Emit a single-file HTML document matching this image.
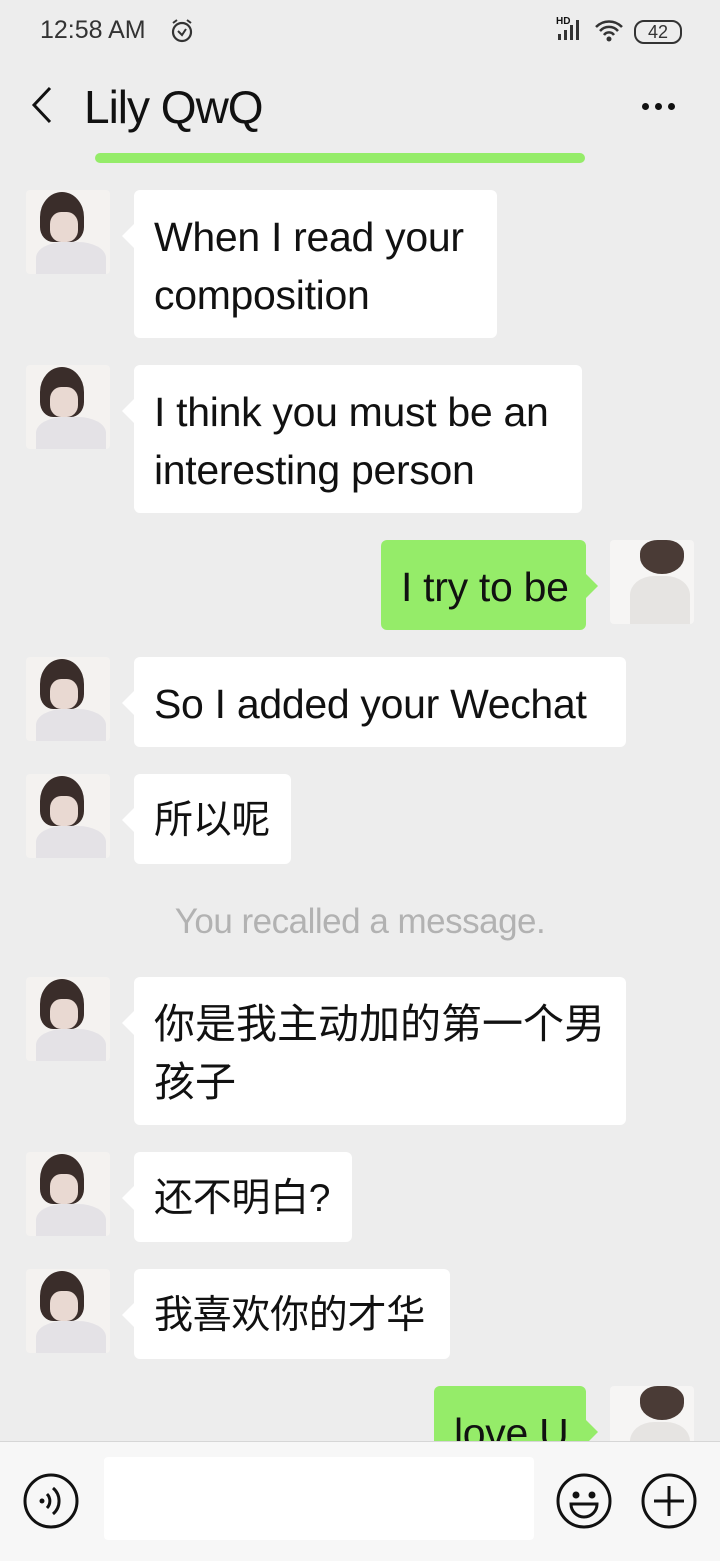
<!DOCTYPE html>
<html><head><meta charset="utf-8"><style>
body{margin:0;width:720px;height:1560px;background:#ededed;position:relative;overflow:hidden;font-family:"Liberation Sans","Noto Sans CJK SC",sans-serif;color:#111}
.a{position:absolute}
.b{position:absolute;background:#fff;border-radius:6px;font-size:41px;line-height:58px;padding:18px 10px 14px 20px;box-sizing:border-box;letter-spacing:-0.3px}
.n{white-space:nowrap}
.b.l::before{content:"";position:absolute;left:-12px;top:34px;border:12px solid transparent;border-right-color:#fff;border-left:0}
.b.r{background:#95ec69}
.b.r::after{content:"";position:absolute;right:-12px;top:34px;border:12px solid transparent;border-left-color:#95ec69;border-right:0}
.av{position:absolute;width:84px;height:84px;background:#f4f2f0;overflow:hidden;border-radius:4px}
.av i{position:absolute;display:block}
</style></head><body>
<div class="a" style="left:40px;top:16px;font-size:25px;color:#333">12:58 AM</div>
<svg class="a" style="left:170px;top:18px" width="24" height="26" viewBox="0 0 24 26"><circle cx="12" cy="14" r="9" fill="none" stroke="#333" stroke-width="2.2"/><path d="M8 13l4 4 4-6M3 5l4-3M21 5l-4-3" fill="none" stroke="#333" stroke-width="2"/></svg>
<div class="a" style="left:556px;top:16px;font-size:10px;font-weight:bold">HD</div>
<svg class="a" style="left:556px;top:20px" width="30" height="22"><rect x="2" y="14" width="3" height="6" fill="#333"/><rect x="8" y="10" width="3" height="10" fill="#333"/><rect x="14" y="5" width="3" height="15" fill="#333"/><rect x="20" y="0" width="3" height="20" fill="#333"/></svg>
<svg class="a" style="left:594px;top:18px" width="32" height="26" viewBox="0 0 32 26"><path d="M2 9a18 18 0 0 1 26 0M6 13a12 12 0 0 1 18 0M10 17a6 6 0 0 1 10 0" fill="none" stroke="#333" stroke-width="2.5"/><circle cx="15" cy="21" r="2.5" fill="#333"/></svg>
<div class="a" style="left:634px;top:20px;width:44px;height:20px;border:2px solid #333;border-radius:10px;font-size:18px;line-height:20px;text-align:center;color:#333">42</div>
<svg class="a" style="left:30px;top:86px" width="24" height="38"><path d="M20 2L4 19l16 17" fill="none" stroke="#111" stroke-width="3"/></svg>
<div class="a" style="left:84px;top:80px;font-size:46px;letter-spacing:-1px">Lily QwQ</div>
<div class="a" style="left:642px;top:103px;font-size:0"><span style="display:inline-block;width:7px;height:7px;border-radius:50%;background:#111;margin-right:6px"></span><span style="display:inline-block;width:7px;height:7px;border-radius:50%;background:#111;margin-right:6px"></span><span style="display:inline-block;width:7px;height:7px;border-radius:50%;background:#111"></span></div>
<div class="a" style="left:95px;top:153px;width:490px;height:10px;background:#95ec69;border-radius:5px"></div>

<div class="av" style="left:26px;top:190px"><i style="left:14px;top:2px;width:44px;height:50px;background:#3a2d2a;border-radius:50% 50% 30% 30%"></i><i style="left:24px;top:22px;width:28px;height:30px;background:#e9d9d2;border-radius:40%"></i><i style="left:10px;top:52px;width:70px;height:40px;background:#e4e2e6;border-radius:40% 40% 0 0"></i></div>
<div class="av" style="left:26px;top:365px"><i style="left:14px;top:2px;width:44px;height:50px;background:#3a2d2a;border-radius:50% 50% 30% 30%"></i><i style="left:24px;top:22px;width:28px;height:30px;background:#e9d9d2;border-radius:40%"></i><i style="left:10px;top:52px;width:70px;height:40px;background:#e4e2e6;border-radius:40% 40% 0 0"></i></div>
<div class="av" style="left:26px;top:657px"><i style="left:14px;top:2px;width:44px;height:50px;background:#3a2d2a;border-radius:50% 50% 30% 30%"></i><i style="left:24px;top:22px;width:28px;height:30px;background:#e9d9d2;border-radius:40%"></i><i style="left:10px;top:52px;width:70px;height:40px;background:#e4e2e6;border-radius:40% 40% 0 0"></i></div>
<div class="av" style="left:26px;top:774px"><i style="left:14px;top:2px;width:44px;height:50px;background:#3a2d2a;border-radius:50% 50% 30% 30%"></i><i style="left:24px;top:22px;width:28px;height:30px;background:#e9d9d2;border-radius:40%"></i><i style="left:10px;top:52px;width:70px;height:40px;background:#e4e2e6;border-radius:40% 40% 0 0"></i></div>
<div class="av" style="left:26px;top:977px"><i style="left:14px;top:2px;width:44px;height:50px;background:#3a2d2a;border-radius:50% 50% 30% 30%"></i><i style="left:24px;top:22px;width:28px;height:30px;background:#e9d9d2;border-radius:40%"></i><i style="left:10px;top:52px;width:70px;height:40px;background:#e4e2e6;border-radius:40% 40% 0 0"></i></div>
<div class="av" style="left:26px;top:1152px"><i style="left:14px;top:2px;width:44px;height:50px;background:#3a2d2a;border-radius:50% 50% 30% 30%"></i><i style="left:24px;top:22px;width:28px;height:30px;background:#e9d9d2;border-radius:40%"></i><i style="left:10px;top:52px;width:70px;height:40px;background:#e4e2e6;border-radius:40% 40% 0 0"></i></div>
<div class="av" style="left:26px;top:1269px"><i style="left:14px;top:2px;width:44px;height:50px;background:#3a2d2a;border-radius:50% 50% 30% 30%"></i><i style="left:24px;top:22px;width:28px;height:30px;background:#e9d9d2;border-radius:40%"></i><i style="left:10px;top:52px;width:70px;height:40px;background:#e4e2e6;border-radius:40% 40% 0 0"></i></div>
<div class="av" style="left:610px;top:540px;background:#f6f5f4"><i style="left:30px;top:0;width:44px;height:34px;background:#4a3b36;border-radius:40% 40% 50% 50%"></i><i style="left:20px;top:36px;width:60px;height:48px;background:#e6e4e2;border-radius:40% 40% 0 0"></i></div>
<div class="av" style="left:610px;top:1386px;height:55px;background:#f6f5f4;border-radius:4px 4px 0 0"><i style="left:30px;top:0;width:44px;height:34px;background:#4a3b36;border-radius:40% 40% 50% 50%"></i><i style="left:20px;top:36px;width:60px;height:48px;background:#e6e4e2;border-radius:40% 40% 0 0"></i></div>

<div class="b l" style="left:134px;top:190px;width:363px;height:148px">When I read your<br>composition</div>
<div class="b l" style="left:134px;top:365px;width:448px;height:148px">I think you must be an<br>interesting person</div>
<div class="b r n" style="left:381px;top:540px;width:205px;height:90px">I try to be</div>
<div class="b l n" style="left:134px;top:657px;width:492px;height:90px">So I added your Wechat</div>
<div class="b l n" style="left:134px;top:774px;width:157px;height:90px;font-size:39px">所以呢</div>
<div class="a" style="left:0;width:720px;top:902px;text-align:center;font-size:35px;color:#b2b2b2;letter-spacing:-0.5px">You recalled a message.</div>
<div class="b l" style="left:134px;top:977px;width:492px;height:148px;letter-spacing:0;white-space:nowrap">你是我主动加的第一个男<br>孩子</div>
<div class="b l n" style="left:134px;top:1152px;width:218px;height:90px;font-size:39px">还不明白?</div>
<div class="b l n" style="left:134px;top:1269px;width:316px;height:90px;font-size:39px">我喜欢你的才华</div>
<div class="b r n" style="left:434px;top:1386px;width:152px;height:90px">love U</div>

<div class="a" style="left:0;top:1441px;width:720px;height:119px;background:#f7f7f7;border-top:1px solid #d6d6d6"></div>
<div class="a" style="left:104px;top:1457px;width:430px;height:83px;background:#fff;border-radius:4px"></div>
<svg class="a" style="left:22px;top:1472px" width="58" height="58" viewBox="0 0 58 58"><circle cx="29" cy="29" r="26" fill="none" stroke="#111" stroke-width="3"/><circle cx="20" cy="29" r="2.5" fill="#111"/><path d="M25 22a10 10 0 0 1 0 14M31 16a17 17 0 0 1 0 26" fill="none" stroke="#111" stroke-width="3"/></svg>
<svg class="a" style="left:555px;top:1472px" width="58" height="58" viewBox="0 0 58 58"><circle cx="29" cy="29" r="26" fill="none" stroke="#111" stroke-width="3"/><circle cx="21" cy="23" r="3.5" fill="#111"/><circle cx="37" cy="23" r="3.5" fill="#111"/><path d="M16 32h26a13 13 0 0 1-26 0z" fill="none" stroke="#111" stroke-width="3"/></svg>
<svg class="a" style="left:640px;top:1472px" width="58" height="58" viewBox="0 0 58 58"><circle cx="29" cy="29" r="26" fill="none" stroke="#111" stroke-width="3"/><path d="M29 14v30M14 29h30" stroke="#111" stroke-width="3"/></svg>
</body></html>
